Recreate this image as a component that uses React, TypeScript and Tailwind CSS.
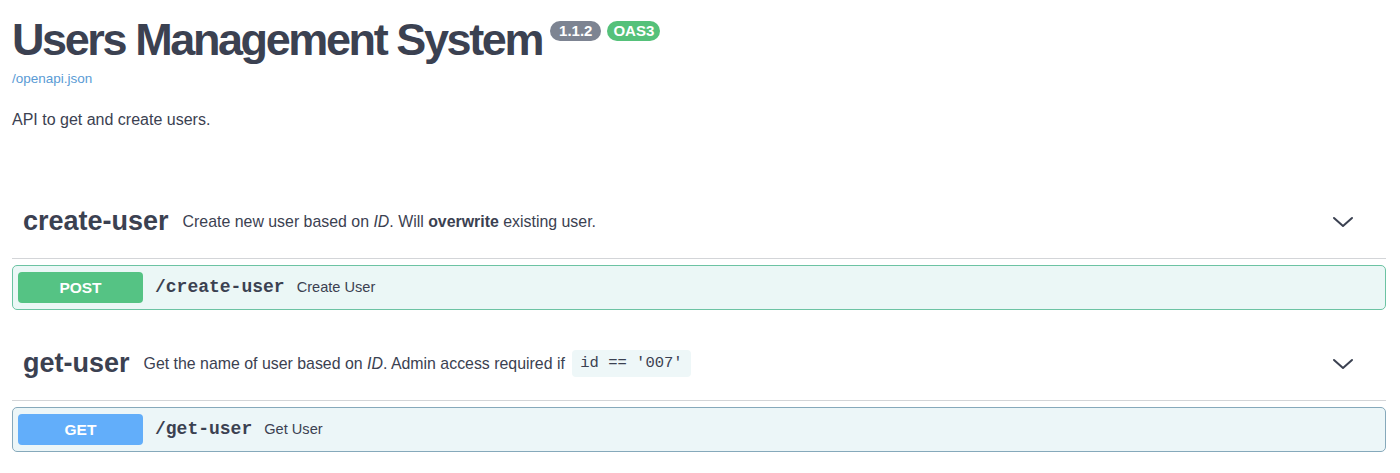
import React from "react";

const sans = { fontFamily: '"Liberation Sans", Arial, sans-serif' };
const mono = { fontFamily: '"Liberation Mono", "Courier New", monospace' };

function Chevron() {
  return (
    <svg width="22" height="14" viewBox="0 0 22 14" className="shrink-0">
      <path d="M2 3 L11 11 L20 3" fill="none" stroke="#3b4151" strokeWidth="2" strokeLinecap="round" strokeLinejoin="round" />
    </svg>
  );
}

function Tag({ name, children }: { name: string; children: React.ReactNode }) {
  return (
    <div className="flex items-center h-[74px] border-b border-[#d3d5d8] pl-[11px] pr-[32px]">
      <span className="text-[27px] font-bold text-[#3b4151]">{name}</span>
      <span className="ml-[14px] text-[15.9px] text-[#3b4151] flex-1 flex items-center">{children}</span>
      <Chevron />
    </div>
  );
}

function Op({ method, path, summary, color, bg, border }: { method: string; path: string; summary: string; color: string; bg: string; border: string }) {
  return (
    <div className={`mt-[6px] mb-[4px] h-[45px] rounded-[5px] border flex items-center px-[5px] ${bg} ${border}`}>
      <div className={`w-[125px] h-[31px] rounded-[4px] flex items-center justify-center text-white font-bold text-[15.5px] ${color}`}>{method}</div>
      <span className="ml-[12px] text-[18px] font-bold text-[#3b4151]" style={mono}>{path}</span>
      <span className="ml-[12px] text-[14.6px] text-[#3b4151]">{summary}</span>
    </div>
  );
}

export default function App() {
  return (
    <div className="bg-white w-[1400px] h-[473px] overflow-hidden pl-[12px] pr-[14px]" style={sans}>
      <div className="pt-[14px] flex items-start">
        <h1 className="text-[45px] leading-[52px] font-bold text-[#3b4151] tracking-[-2.4px]">Users Management System</h1>
        <span className="ml-[8px] mt-[7px] h-[20px] px-[9px] rounded-full bg-[#7d8492] text-white font-bold text-[15px] leading-[20px]">1.1.2</span>
        <span className="ml-[6px] mt-[7px] h-[20px] px-[6px] rounded-full bg-[#55c17a] text-white font-bold text-[15px] leading-[20px]">OAS3</span>
      </div>
      <div className="mt-[5px] text-[13.5px] leading-[16px] text-[#5a9bd5]">/openapi.json</div>
      <div className="mt-[23px] text-[16px] leading-[20px] text-[#3b4151]">API to get and create users.</div>
      <div className="mt-[55px]">
        <Tag name="create-user">
          Create new user based on&nbsp;<i>ID</i>. Will&nbsp;<b>overwrite</b>&nbsp;existing user.
        </Tag>
        <Op method="POST" path="/create-user" summary="Create User" color="bg-[#55c384]" bg="bg-[#ebf7f6]" border="border-[#6cc3a3]" />
        <div className="h-[13px]" />
        <Tag name="get-user">
          Get the name of user based on&nbsp;<i>ID</i>. Admin access required if&nbsp;
          <code className="ml-[3px] px-[8px] h-[27px] flex items-center rounded-[4px] bg-[#eef7f8] text-[15.5px] text-[#3b4151]" style={mono}>id == '007'</code>
        </Tag>
        <Op method="GET" path="/get-user" summary="Get User" color="bg-[#62aefa]" bg="bg-[#ecf6f8]" border="border-[#86a9bb]" />
      </div>
    </div>
  );
}
